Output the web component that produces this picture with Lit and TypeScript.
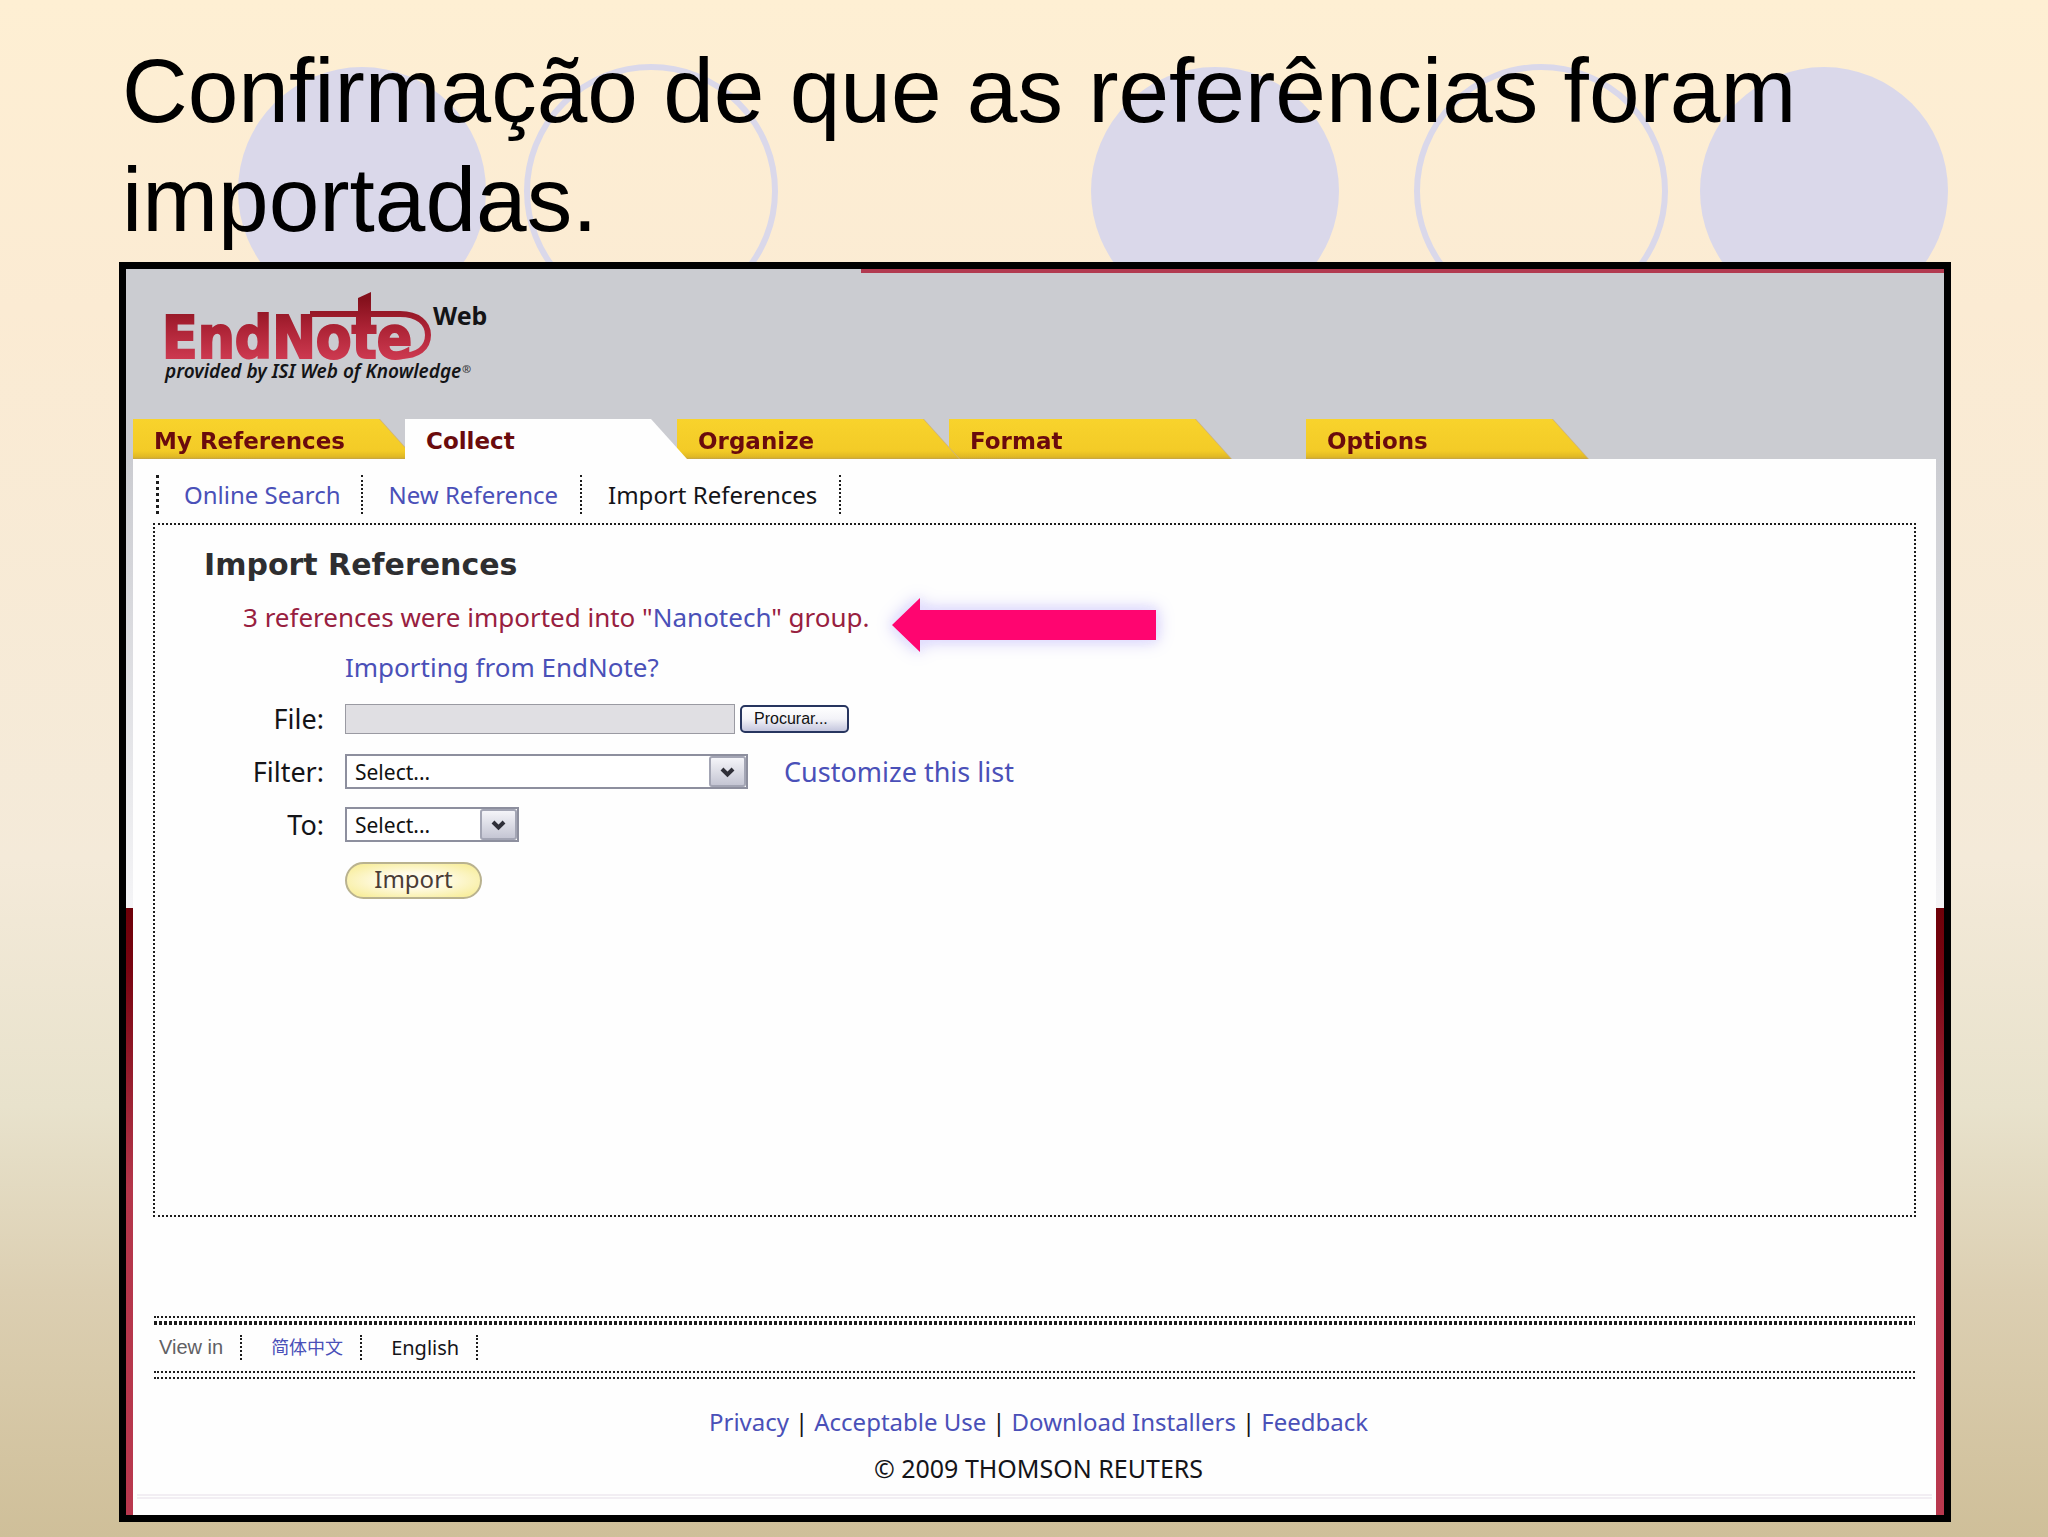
import { LitElement, html, css, svg } from 'lit';
import { classMap } from 'lit/directives/class-map.js';

interface Tab {
  label: string;
  active?: boolean;
  apart?: boolean;
}

const TABS: Tab[] = [
  { label: 'My References' },
  { label: 'Collect', active: true },
  { label: 'Organize' },
  { label: 'Format' },
  { label: 'Options', apart: true },
];

const FOOTER_LINKS = ['Privacy', 'Acceptable Use', 'Download Installers', 'Feedback'];

const FILLED_DISCS = [362, 1215, 1824];
const RINGS = [651, 1541];

class EndnoteLogo extends LitElement {
  static styles = css`
    :host {
      display: block;
    }
    .logo {
      display: block;
      width: 340px;
      height: 110px;
      overflow: visible;
    }
    .name {
      font: 700 58px 'DejaVu Sans Condensed', 'DejaVu Sans', sans-serif;
    }
    .web {
      font: 700 25px 'Noto Sans', sans-serif;
    }
    .tagline {
      font: italic 600 19px 'Noto Sans', sans-serif;
    }
    .mark {
      font: 600 11px 'Noto Sans', sans-serif;
    }
  `;

  render() {
    return html`
      <svg class="logo" viewBox="0 0 340 110" role="img" aria-label="EndNote Web">
        <defs>
          <linearGradient id="red" gradientUnits="userSpaceOnUse" x1="0" y1="14" x2="0" y2="76">
            <stop offset="0" stop-color="#84101c" />
            <stop offset="0.45" stop-color="#ab2234" />
            <stop offset="1" stop-color="#cf3b52" />
          </linearGradient>
        </defs>
        <text class="name" x="2" y="73" fill="url(#red)" stroke="url(#red)" stroke-width="2">EndNote</text>
        <path d="M198 40 V13 L211 7 V40 Z" fill="url(#red)" />
        <path
          d="M150 29 H240 C258 29 268 38 268 50 C268 63 258 71 240 71"
          fill="none"
          stroke="url(#red)"
          stroke-width="6"
        />
        <text class="web" x="273" y="40" fill="#141416">Web</text>
        <text class="tagline" x="5" y="93" fill="#141416">provided by ISI Web of Knowledge</text>
        <text class="mark" x="302" y="88" fill="#3c3c40">®</text>
      </svg>
    `;
  }
}
customElements.define('endnote-logo', EndnoteLogo);

class AppRoot extends LitElement {
  static styles = css`
    :host {
      display: block;
      --link: #4a50b8;
      --ink: #141418;
      --dots: 2px dotted #1c1c1c;
      --body: 'Noto Sans', 'Noto Sans CJK SC', sans-serif;
      --strong: 'DejaVu Sans', sans-serif;
    }
    * {
      box-sizing: border-box;
    }
    a {
      color: var(--link);
      text-decoration: none;
    }
    ul {
      margin: 0;
      padding: 0;
      list-style: none;
    }
    .slide {
      position: relative;
      display: flex;
      flex-direction: column;
      gap: 8px;
      min-height: 100vh;
      padding: 36px 97px 15px 119px;
      background: linear-gradient(
        #feefd3 0%,
        #fbebd3 20%,
        #f4ead9 56%,
        #e8e2cc 72%,
        #dccfb2 84%,
        #cfbf99 100%
      );
      font-family: var(--body);
      color: var(--ink);
    }
    .discs {
      position: absolute;
      top: 0;
      left: 0;
      width: 100%;
      height: auto;
    }
    .title {
      position: relative;
      margin: 0;
      padding-left: 3px;
      font: 400 91px/109px 'Liberation Sans', sans-serif;
      color: #000;
    }
    .frame {
      position: relative;
      flex: 1;
      display: flex;
      flex-direction: column;
      border: 7px solid #000;
      background: #fefefe;
    }

    .banner {
      display: flex;
      flex-direction: column;
      background: #cbccd1;
    }
    .stripe {
      align-self: flex-end;
      width: calc(60% - 8px);
      height: 4px;
      background: #b23a50;
    }
    .logo {
      padding: 12px 0 24px 34px;
    }
    .tabs {
      display: flex;
      padding-left: 7px;
    }
    .tab {
      position: relative;
      width: 282px;
      margin-right: -10px;
      filter: drop-shadow(1px 0 #cdb27c);
    }
    .tab:nth-child(3) {
      z-index: 1;
    }
    .tab.active {
      z-index: 2;
      filter: none;
    }
    .tab.apart {
      margin-left: 85px;
    }
    .tab a {
      display: block;
      height: 40px;
      padding: 4px 0 0 21px;
      font: 700 23px/36px var(--strong);
      color: #6a0b0d;
      background: linear-gradient(#f8d32c 0, #f3cb27 32px, #e0b824 38px, #c3a347 40px);
      clip-path: polygon(0 0, 246px 0, 100% 100%, 0 100%);
    }
    .tab.active a {
      background: #fefefe;
    }

    .columns {
      flex: 1;
      display: grid;
      grid-template-columns: 7px 1fr 8px;
    }
    .rail {
      background: linear-gradient(
        #cbccd1 0%,
        #f4f4f6 42.5%,
        #6d0008 42.5%,
        #780410 48%,
        #b4364a 69%,
        #b9384e 100%
      );
    }
    .content {
      display: flex;
      flex-direction: column;
      padding: 16px 20px;
    }
    .submenu {
      display: flex;
      align-self: flex-start;
      margin-left: 3px;
      border-left: 3px dotted #1c1c1c;
      font-size: 24px;
      line-height: 39px;
    }
    .submenu li {
      padding: 0 22px 0 26px;
      border-right: var(--dots);
    }
    .submenu li:first-child {
      padding: 0 20px 0 25px;
    }
    .panel {
      flex: 1;
      margin-top: 9px;
      padding: 20px 0;
      border: var(--dots);
    }
    .heading {
      margin: 0;
      padding-left: 49px;
      font: 700 30px/40px var(--strong);
      color: #2e2e30;
    }
    .message {
      position: relative;
      width: fit-content;
      margin: 14px 0 6px 88px;
      font-size: 26px;
      line-height: 36px;
      color: #98203f;
    }
    .arrow {
      position: absolute;
      top: -1px;
      left: calc(100% + 22px);
      width: 264px;
      height: 54px;
      overflow: visible;
      filter: drop-shadow(0 0 4px #e6e2ff) drop-shadow(0 0 8px #d0cbfa);
    }
    .form {
      display: grid;
      grid-template-columns: 169px 1fr;
      grid-template-rows: 52px 52px 53px 53px 58px;
      column-gap: 21px;
      align-items: center;
      font-size: 26px;
      line-height: 36px;
    }
    .form label,
    .customize {
      font-size: 27px;
    }
    .form label {
      text-align: right;
    }
    .field {
      grid-column: 2;
      display: flex;
      align-items: center;
    }
    .file {
      width: 390px;
      height: 30px;
      margin: 0 5px 0 0;
      padding: 0 6px;
      border: 1px solid #9a9aa2;
      border-radius: 0;
      background: #e0dfe3;
      font: 20px var(--body);
    }
    .browse {
      width: 109px;
      height: 28px;
      padding: 0 0 0 12px;
      border: 2px solid #27355f;
      border-radius: 5px;
      background: linear-gradient(#fff 0%, #f3f3f8 50%, #c4c6de 100%);
      font: 16px/22px 'Liberation Sans', sans-serif;
      text-align: left;
      color: #111;
    }
    .picker {
      position: relative;
      width: 403px;
      height: 35px;
    }
    .picker.short {
      width: 174px;
    }
    .picker select {
      appearance: none;
      display: block;
      width: 100%;
      height: 100%;
      margin: 0;
      padding: 0 42px 0 8px;
      border: 2px solid #8d8f9e;
      border-radius: 0;
      background: #fff;
      font: 21px/30px var(--body);
      color: #111;
    }
    .chevron {
      position: absolute;
      top: 2px;
      right: 2px;
      width: 37px;
      height: 31px;
      pointer-events: none;
    }
    .customize {
      margin-left: 36px;
    }
    .import {
      width: 137px;
      height: 37px;
      padding: 0 0 3px;
      border: 2px solid #b9b28f;
      border-radius: 19px;
      background: radial-gradient(ellipse at center, #fffbe9 30%, #f8ee9f 85%);
      font: 24px/30px var(--body);
      color: #4a3c36;
    }

    .rule {
      height: 9px;
      border-top: var(--dots);
      margin: 0 1px;
      padding-top: 3px;
    }
    .rule::after {
      content: '';
      display: block;
      height: 4px;
      background: repeating-linear-gradient(90deg, #1c1c1c 0 3px, #fefefe 3px 5px);
    }
    .rule.thin {
      height: 8px;
      border-bottom: var(--dots);
    }
    .rule.thin::after {
      content: none;
    }
    .languages {
      display: flex;
      align-items: center;
      height: 46px;
      padding: 0 0 2px 6px;
      font-size: 20px;
      line-height: 25px;
    }
    .languages li {
      padding: 0 17px 0 29px;
      border-right: var(--dots);
    }
    .languages .caption {
      padding-left: 0;
      font-family: 'Liberation Sans', sans-serif;
      color: #606064;
    }
    .languages .chinese {
      font-size: 18px;
    }
    .footer {
      margin-top: 99px;
    }
    .legal {
      padding: 19px 0 2px 8px;
      text-align: center;
      font-size: 24px;
      line-height: 47px;
    }
    .legal p {
      margin: 0;
    }
    .legal .bar {
      padding: 0 6px;
    }
    .legal .copyright {
      font-size: 25px;
    }
    .edge {
      height: 5px;
      margin: 0 -16px;
      border: solid #f2eef3;
      border-width: 2px 0;
    }
  `;

  private tab(t: Tab) {
    return html`<li class=${classMap({ tab: true, active: !!t.active, apart: !!t.apart })}>
      <a href="#">${t.label}</a>
    </li>`;
  }

  private picker(id: string, short: boolean) {
    return html`<div class=${classMap({ picker: true, short })}>
      <select id=${id}>
        <option>Select...</option>
      </select>
      <svg class="chevron" viewBox="0 0 37 31" aria-hidden="true">
        <defs>
          <linearGradient id="face" x1="0" y1="0" x2="0" y2="1">
            <stop offset="0" stop-color="#f6f6fa" />
            <stop offset="1" stop-color="#c3c4d2" />
          </linearGradient>
        </defs>
        <rect x="1" y="1" width="35" height="29" rx="2" fill="url(#face)" stroke="#a3a5b4" stroke-width="2" />
        <path d="M13 13 L18.500 18.500 L24 13" fill="none" stroke="#2f2f38" stroke-width="4" />
      </svg>
    </div>`;
  }

  render() {
    return html`
      <main class="slide">
        <svg class="discs" viewBox="0 0 2048 320" aria-hidden="true">
          ${FILLED_DISCS.map((x) => svg`<circle cx=${x} cy="191" r="124" fill="#dad8ea" />`)}
          ${RINGS.map(
            (x) => svg`<circle cx=${x} cy="191" r="124" fill="none" stroke="#dad8ea" stroke-width="6" />`,
          )}
        </svg>
        <h1 class="title">Confirmação de que as referências foram importadas.</h1>

        <div class="frame">
          <header class="banner">
            <div class="stripe"></div>
            <endnote-logo class="logo"></endnote-logo>
            <nav>
              <ul class="tabs">
                ${TABS.map((t) => this.tab(t))}
              </ul>
            </nav>
          </header>

          <div class="columns">
            <div class="rail"></div>
            <div class="content">
              <ul class="submenu">
                <li><a href="#">Online Search</a></li>
                <li><a href="#">New Reference</a></li>
                <li>Import References</li>
              </ul>

              <section class="panel">
                <h2 class="heading">Import References</h2>
                <p class="message">
                  3 references were imported into "<a href="#">Nanotech</a>" group.
                  <svg class="arrow" viewBox="0 0 264 54" aria-hidden="true">
                    <path d="M0 27 L28 0 V12 H264 V42 H28 V54 Z" fill="#ff0570" />
                  </svg>
                </p>
                <form class="form" @submit=${(e: Event) => e.preventDefault()}>
                  <div class="field"><a href="#">Importing from EndNote?</a></div>
                  <label for="file">File:</label>
                  <div class="field">
                    <input class="file" id="file" type="text" readonly />
                    <button class="browse" type="button">Procurar...</button>
                  </div>
                  <label for="filter">Filter:</label>
                  <div class="field">
                    ${this.picker('filter', false)}
                    <a class="customize" href="#">Customize this list</a>
                  </div>
                  <label for="to">To:</label>
                  <div class="field">${this.picker('to', true)}</div>
                  <div class="field"><button class="import" type="submit">Import</button></div>
                </form>
              </section>

              <footer class="footer">
                <div class="rule"></div>
                <ul class="languages">
                  <li class="caption">View in</li>
                  <li class="chinese"><a href="#" lang="zh-CN">简体中文</a></li>
                  <li>English</li>
                </ul>
                <div class="rule thin"></div>
                <div class="legal">
                  <p>
                    ${FOOTER_LINKS.map(
                      (label, i) =>
                        html`${i ? html`<span class="bar">|</span>` : ''}<a href="#">${label}</a>`,
                    )}
                  </p>
                  <p class="copyright">© 2009 THOMSON REUTERS</p>
                </div>
                <div class="edge"></div>
              </footer>
            </div>
            <div class="rail"></div>
          </div>
        </div>
      </main>
    `;
  }
}
customElements.define('app-root', AppRoot);
